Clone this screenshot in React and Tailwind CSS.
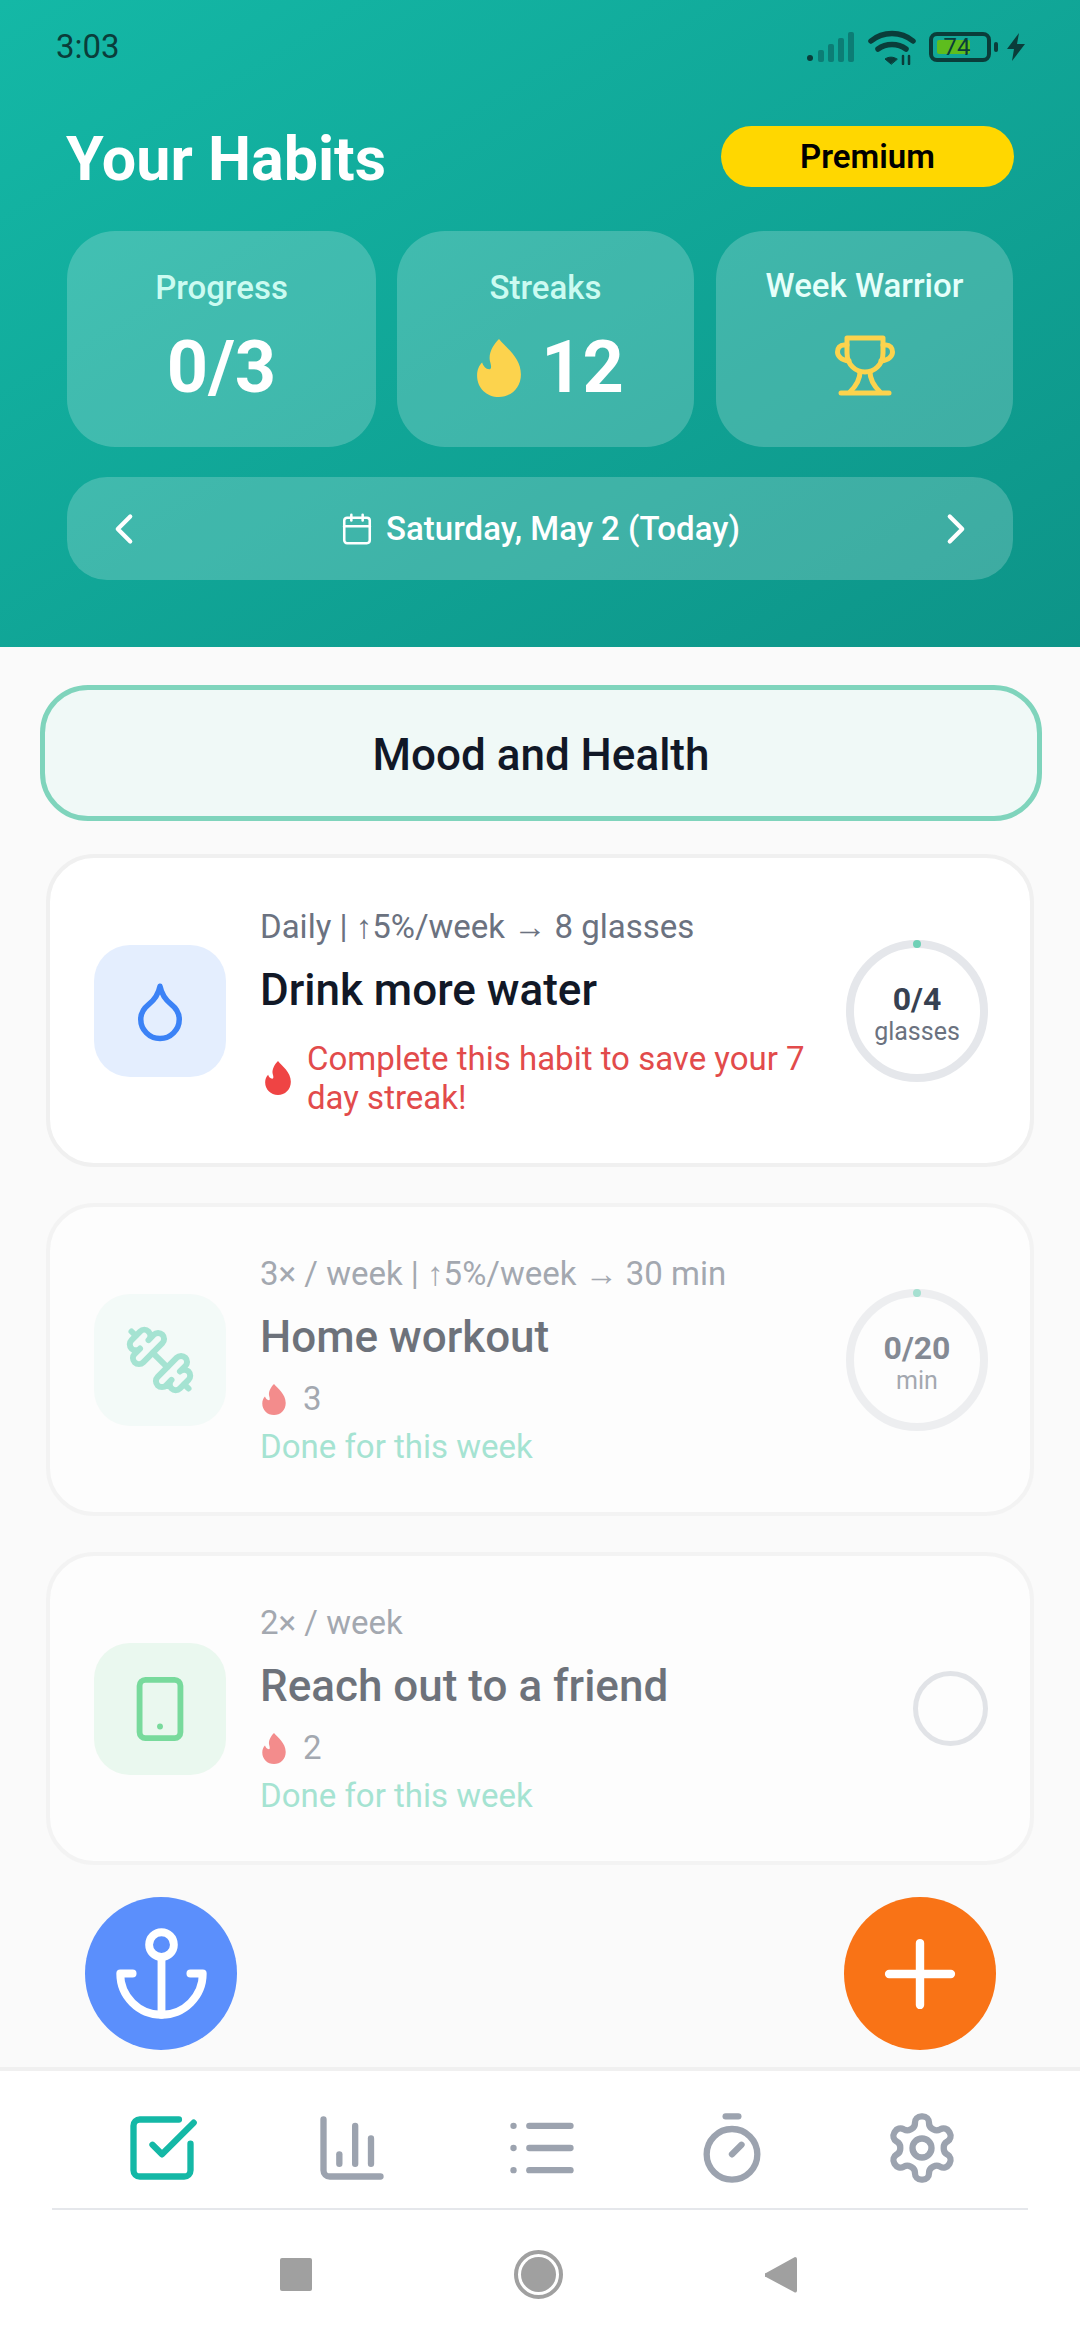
import { Calendar, ChartColumn, ChevronLeft, ChevronRight, Droplet, List, Plus, Smartphone, SquareCheckBig, Timer } from "lucide-react";

const font = { fontFamily: "Roboto, sans-serif" };

function Flame({ className }) {
  return (
    <svg viewBox="0 0 130 172" className={className} fill="currentColor">
      <path d="M65 0C85 25 130 55 130 105c0 40-30 67-65 67-37 0-65-27-65-64 0-16 6-30 15-38 3 10 11 20 21 20 8 0 6-12 2-25C33 40 50 15 65 0z" />
    </svg>
  );
}

function Trophy({ className }) {
  return (
    <svg viewBox="0 0 60 62" className={className} fill="none" stroke="currentColor" strokeWidth="5" strokeLinejoin="round" strokeLinecap="round">
      <path d="M12 4h36v15c0 12-9 19-18 19S12 31 12 19V4z" />
      <path d="M25 38c0 8-4 14-10 20M35 38c0 8 4 14 10 20" />
      <path d="M12 11H9c-4 0-6.500 3-6.500 7S6 26 14 27" />
      <path d="M48 11h3c4 0 6.500 3 6.500 7S54 26 46 27" />
      <path d="M6 59h48" />
    </svg>
  );
}

function DumbbellIcon({ className }) {
  return (
    <svg viewBox="0 0 24 24" className={className} fill="none" stroke="currentColor" strokeWidth="2" strokeLinecap="round" strokeLinejoin="round">
      <path d="M14.400 14.400 9.600 9.600" />
      <path d="M18.657 21.485a2 2 0 1 1-2.829-2.828l-1.767 1.768a2 2 0 1 1-2.829-2.829l6.364-6.364a2 2 0 1 1 2.829 2.829l-1.768 1.767a2 2 0 1 1 2.828 2.829z" />
      <path d="m21.500 21.500-1.400-1.400" />
      <path d="M3.900 3.900 2.500 2.500" />
      <path d="M6.404 12.768a2 2 0 1 1-2.829-2.829l1.768-1.767a2 2 0 1 1-2.828-2.829l2.828-2.828a2 2 0 1 1 2.829 2.828l1.767-1.768a2 2 0 1 1 2.829 2.829z" />
    </svg>
  );
}

function AnchorIcon({ className }) {
  return (
    <svg viewBox="0 0 24 24" className={className} fill="none" stroke="currentColor" strokeWidth="1.900" strokeLinecap="round" strokeLinejoin="round">
      <circle cx="12" cy="5" r="3" />
      <path d="M12 22V8" />
      <path d="M5 12H2a10 10 0 0 0 20 0h-3" />
    </svg>
  );
}

function GearIcon({ className }) {
  return (
    <svg viewBox="0 0 24 24" className={className} fill="none" stroke="currentColor" strokeWidth="2" strokeLinecap="round" strokeLinejoin="round">
      <path d="M12.220 2h-.44a2 2 0 0 0-2 2v.18a2 2 0 0 1-1 1.730l-.43.25a2 2 0 0 1-2 0l-.15-.08a2 2 0 0 0-2.730.73l-.22.38a2 2 0 0 0 .73 2.730l.15.1a2 2 0 0 1 1 1.720v.51a2 2 0 0 1-1 1.740l-.15.09a2 2 0 0 0-.73 2.730l.22.38a2 2 0 0 0 2.730.73l.15-.08a2 2 0 0 1 2 0l.43.25a2 2 0 0 1 1 1.730V20a2 2 0 0 0 2 2h.44a2 2 0 0 0 2-2v-.18a2 2 0 0 1 1-1.730l.43-.25a2 2 0 0 1 2 0l.15.08a2 2 0 0 0 2.730-.73l.22-.39a2 2 0 0 0-.73-2.730l-.15-.08a2 2 0 0 1-1-1.740v-.5a2 2 0 0 1 1-1.740l.15-.09a2 2 0 0 0 .73-2.730l-.22-.38a2 2 0 0 0-2.730-.73l-.15.08a2 2 0 0 1-2 0l-.43-.25a2 2 0 0 1-1-1.730V4a2 2 0 0 0-2-2z" />
      <circle cx="12" cy="12" r="3" />
    </svg>
  );
}

function StatusBar() {
  return (
    <div className="flex items-center justify-between h-[64px] pl-[56px] pr-[55px] pt-[29px]">
      <span className="text-[33px] leading-[36px] text-[#0a3d3a]">3:03</span>
      <div className="flex items-center">
        <svg viewBox="0 0 48 30" className="w-[48px] h-[30px] text-[#0c7d75]" fill="currentColor">
          <circle cx="3" cy="26" r="3" fill="#0a3d3a" />
          <rect x="11" y="18" width="6" height="12" rx="2" />
          <rect x="21" y="12" width="6" height="18" rx="2" />
          <rect x="31" y="6" width="6" height="24" rx="2" />
          <rect x="41" y="0" width="6" height="30" rx="2" />
        </svg>
        <svg viewBox="0 0 48 36" className="w-[48px] h-[36px] ml-[13px] text-[#0a3d3a]" fill="none" stroke="currentColor" strokeWidth="5.500" strokeLinecap="round">
          <path d="M3 12c12-10 30-10 42 0" />
          <path d="M10 20c8-6 20-6 28 0" />
          <path d="M23 35l-6-5c4-2.500 8-2.500 12 0z" fill="currentColor" strokeWidth="1" />
          <path d="M35 27v8M41 27v8" strokeWidth="2.500" />
        </svg>
        <div className="relative ml-[13px] flex items-center justify-center w-[62px] h-[30px] rounded-[8px] border-[4px] border-[#0a3d3a] text-[24px] leading-none text-[#0a3d3a]">
          <span className="absolute left-[4px] top-[4px] bottom-[4px] w-[33px] rounded-[2px] bg-[#5ebd1e]" />
          <span className="relative left-[-3px]">74</span>
        </div>
        <span className="ml-[3px] w-[4px] h-[10px] rounded-[2px] bg-[#0a3d3a]" />
        <svg viewBox="0 0 18 28" className="w-[18px] h-[28px] ml-[9px] text-[#0a3d3a]" fill="currentColor">
          <path d="M12 0L0 16h7l-2 12 13-17h-8z" />
        </svg>
      </div>
    </div>
  );
}

function StatCard({ label, wide, bright, children }) {
  return (
    <div className={`${wide ? "w-[309px]" : "w-[297px]"} h-[216px] rounded-[48px] bg-white/20 flex flex-col items-center ${bright ? "pt-[33px]" : "pt-[35px]"}`}>
      <span className={`text-[33px] leading-[44px] font-medium ${bright ? "text-[#e6fffa]" : "text-[#ccfbf1]"}`}>{label}</span>
      {children}
    </div>
  );
}

function Ring({ value, unit }) {
  return (
    <div className="relative shrink-0 w-[142px] h-[142px] rounded-full border-[8px] border-[#e5e7eb] flex flex-col items-center justify-center pt-[5px]">
      <span className="absolute top-[-8px] w-[8px] h-[8px] rounded-full bg-[#6fd0b6]" />
      <span className="text-[32px] leading-[38px] font-bold text-[#374151]">{value}</span>
      <span className="text-[25px] leading-[28px] text-[#6b7280]">{unit}</span>
    </div>
  );
}

function HabitCard({ tile, icon, meta, title, faded, right, children }) {
  return (
    <div className={`h-[313px] rounded-[48px] border-[4px] border-[#f0f0f0] bg-white flex items-center pl-[44px] pr-[42px] ${faded ? "opacity-60" : ""}`}>
      <div className={`shrink-0 w-[132px] h-[132px] rounded-[36px] flex items-center justify-center ${tile}`}>{icon}</div>
      <div className="flex-1 min-w-0 ml-[34px] pt-[2px]">
        <p className="text-[33px] leading-[40px] text-[#6b7280]">{meta}</p>
        <p className="mt-[15px] text-[44px] leading-[56px] font-medium text-[#111827]">{title}</p>
        {children}
      </div>
      {right}
    </div>
  );
}

function StreakLine({ days }) {
  return (
    <>
      <div className="mt-[14px] flex items-center h-[40px]">
        <Flame className="ml-[2px] w-[24px] h-[31px] text-[#ef4444]" />
        <span className="ml-[17px] text-[33px] text-[#6b7280]">{days}</span>
      </div>
      <p className="mt-[8px] text-[33px] leading-[40px] text-[#6ed5b8]">Done for this week</p>
    </>
  );
}

export default function App() {
  return (
    <div style={font} className="relative w-[1080px] h-[2340px] overflow-hidden bg-[#fafafa] flex flex-col">
      <header className="h-[647px] bg-gradient-to-br from-[#14b8a6] to-[#0d9488]">
        <StatusBar />
        <div className="flex items-start justify-between mt-[62px] pl-[66px] pr-[66px]">
          <h1 className="mt-[3px] text-[61px] leading-[61px] font-bold text-white">Your Habits</h1>
          <button className="w-[293px] h-[61px] rounded-full bg-[#ffd700] text-[33px] font-semibold text-black">Premium</button>
        </div>
        <div className="flex mt-[41px] pl-[67px]">
          <StatCard label="Progress" wide>
            <span className="mt-[16px] text-[72px] leading-[84px] font-bold text-white">0/3</span>
          </StatCard>
          <div className="ml-[21px]">
            <StatCard label="Streaks">
              <div className="mt-[16px] ml-[10px] flex items-center h-[84px]">
                <Flame className="w-[44px] h-[58px] text-[#fcd34d]" />
                <span className="ml-[20px] text-[72px] leading-[84px] font-bold text-white">12</span>
              </div>
            </StatCard>
          </div>
          <div className="ml-[22px]">
            <StatCard label="Week Warrior" bright>
              <Trophy className="mt-[26px] w-[60px] h-[62px] text-[#fcd34d]" />
            </StatCard>
          </div>
        </div>
        <div className="mx-[67px] mt-[30px] h-[103px] rounded-[40px] bg-white/20 flex items-center justify-between px-[32px] text-white">
          <ChevronLeft size={50} strokeWidth={2} />
          <div className="flex items-center gap-[12px] text-[33px] font-medium">
            <Calendar size={34} strokeWidth={1.8} />
            <span>Saturday, May 2 (Today)</span>
          </div>
          <ChevronRight size={50} strokeWidth={2} />
        </div>
      </header>

      <main className="flex-1 min-h-0 px-[46px]">
        <div className="mt-[38px] -ml-[6px] -mr-[8px] h-[136px] rounded-[48px] border-[5px] border-[#7fd4bc] bg-[#f0f9f7] flex items-center justify-center pt-[3px] text-[44px] font-medium text-[#111827]">
          Mood and Health
        </div>
        <div className="mt-[33px] flex flex-col gap-[36px]">
          <HabitCard
            tile="bg-[#e4eefe]"
            icon={<Droplet size={66} strokeWidth={2} className="text-[#3b82f6]" />}
            meta="Daily | ↑5%/week → 8 glasses"
            title="Drink more water"
            right={<Ring value="0/4" unit="glasses" />}
          >
            <div className="mt-[21px] flex items-center">
              <Flame className="shrink-0 ml-[5px] w-[26px] h-[34px] text-[#ef4444]" />
              <p className="ml-[16px] text-[33px] leading-[39px] text-[#e24b4b]">Complete this habit to save your 7 day streak!</p>
            </div>
          </HabitCard>
          <HabitCard
            faded
            tile="bg-[#f0faf7]"
            icon={<DumbbellIcon className="w-[72px] h-[72px] text-[#6ed5b8]" />}
            meta="3× / week | ↑5%/week → 30 min"
            title="Home workout"
            right={<Ring value="0/20" unit="min" />}
          >
            <StreakLine days="3" />
          </HabitCard>
          <HabitCard
            faded
            tile="bg-[#e1f7e8]"
            icon={<Smartphone size={70} strokeWidth={2} className="text-[#22c55e]" />}
            meta="2× / week"
            title="Reach out to a friend"
            right={<span className="shrink-0 w-[75px] h-[75px] rounded-full border-[5px] border-[#d1d5db]" />}
          >
            <StreakLine days="2" />
          </HabitCard>
        </div>
      </main>

      {/* floating buttons over the list */}
      <button className="absolute left-[85px] top-[1897px] w-[152px] h-[153px] rounded-full bg-[#5b8ffc] flex items-center justify-center text-white">
        <AnchorIcon className="w-[99px] h-[99px]" />
      </button>
      <button className="absolute left-[844px] top-[1897px] w-[152px] h-[153px] rounded-full bg-[#f97316] flex items-center justify-center text-white">
        <Plus size={106} strokeWidth={1.9} />
      </button>

      <footer className="h-[273px] shrink-0 bg-white border-t-[4px] border-[#f0f0f0]">
        <div className="h-[139px] mx-[52px] border-b-2 border-[#e5e7eb] flex items-center justify-between pl-[72px] pr-[68px] pt-[16px] text-[#9ca3af]">
          <SquareCheckBig size={76} strokeWidth={2} className="text-[#14b8a6]" />
          <ChartColumn size={76} strokeWidth={2} />
          <List size={76} strokeWidth={2} />
          <Timer size={76} strokeWidth={2} />
          <GearIcon className="w-[76px] h-[76px]" />
        </div>
        <div className="flex items-center justify-between pl-[280px] pr-[283px] pt-[40px]">
          <span className="w-[32px] h-[33px] rounded-[2px] bg-[#a0a0a0]" />
          <span className="w-[49px] h-[49px] rounded-full border-[4px] border-[#a0a0a0] p-[3px]">
            <span className="block w-full h-full rounded-full bg-[#a0a0a0]" />
          </span>
          <svg viewBox="0 0 32 38" className="w-[32px] h-[38px] text-[#a0a0a0]" fill="currentColor">
            <path d="M30 1a2 2 0 0 1 2 2v32a2 2 0 0 1-3 1L1 21a2 2 0 0 1 0-4z" />
          </svg>
        </div>
      </footer>
    </div>
  );
}
